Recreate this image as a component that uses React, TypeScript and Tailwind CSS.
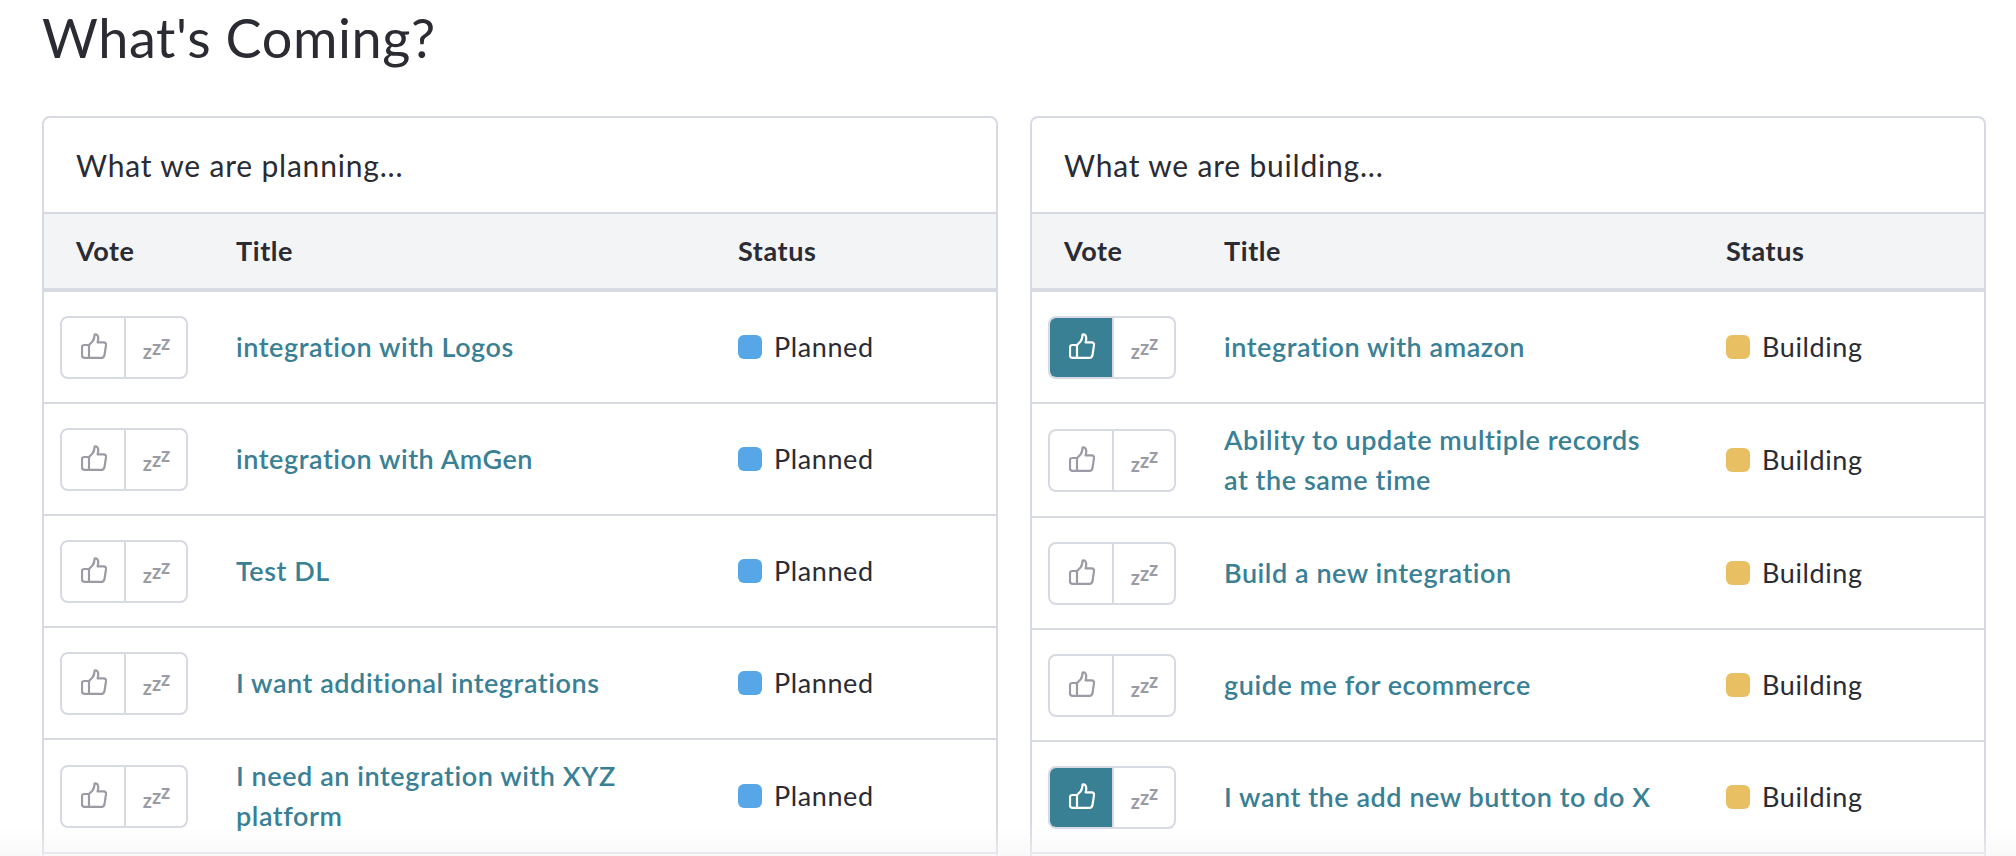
const plan: [string, boolean][] = [
  ["integration with Logos", false],
  ["integration with AmGen", false],
  ["Test DL", false],
  ["I want additional integrations", false],
  ["I need an integration with XYZ platform", false],
  ["", false],
];
const build: [string, boolean][] = [
  ["integration with amazon", true],
  ["Ability to update multiple records at the same time", false],
  ["Build a new integration", false],
  ["guide me for ecommerce", false],
  ["I want the add new button to do X", true],
  ["", false],
];

function Thumb({ on }: { on: boolean }) {
  return (
    <svg width="26" height="26" viewBox="0 0 26 26" fill="none" stroke={on ? "#ffffff" : "#9a9ba5"} strokeWidth="2.2" strokeLinejoin="round" strokeLinecap="round">
      <path d="M8 12 L11.5 8.5 C13 6.8 13.4 4 13.6 1.6 C16 0.6 18.4 3.2 16.6 9.4 L22.6 9.4 C24.6 9.4 25.4 10.8 25 12.4 L23.4 22.6 C23.1 24 22.2 24.8 20.8 24.8 L3.4 24.8 C1.9 24.8 1 24 1 22.6 V14 C1 12.6 1.9 12 3.4 12 H8 V24.6" />
    </svg>
  );
}

function Vote({ on }: { on: boolean }) {
  return (
    <div className="flex h-[63px] w-[128px] overflow-hidden rounded-[8px] border-2 border-[#d8dae3] bg-white">
      <div className={`flex w-[64px] shrink-0 items-center justify-center border-r-2 border-[#d8dae3] pb-[3px] pl-[2px] ${on ? "bg-[#3a8095]" : ""}`}>
        <Thumb on={on} />
      </div>
      <div className="flex flex-1 items-end justify-center pb-[19px] pl-[1px] text-[20px] leading-[14px] font-bold text-[#9a9ba5]">
        <span>z</span>
        <span className="mb-[4px]">z</span>
        <span className="mb-[9px]">z</span>
      </div>
    </div>
  );
}

function Row({ title, on, status, color }: { title: string; on: boolean; status: string; color: string }) {
  return (
    <div className="grid min-h-[112px] grid-cols-[192px_502px_1fr] items-center border-b-2 border-[#d8dae3]">
      <div className="pl-[16px]">{title && <Vote on={on} />}</div>
      <div className="py-[16px] pr-[64px] text-[27px] leading-[40px] font-semibold tracking-[0.55px] text-[#3a8095]">{title}</div>
      <div className="flex items-center gap-[12px] text-[27px] tracking-[0.6px] text-[#2a2b33]">
        {title && <span className="h-[24px] w-[24px] rounded-[6px]" style={{ background: color }} />}
        {title && <span>{status}</span>}
      </div>
    </div>
  );
}

function Card({ heading, rows, status, color }: { heading: string; rows: [string, boolean][]; status: string; color: string }) {
  return (
    <div className="w-[956px] shrink-0 rounded-t-[8px] border-2 border-[#d8dae3] bg-white">
      <div className="flex h-[94px] items-center pl-[32px] text-[30px] tracking-[0.8px] text-[#2a2b33]">{heading}</div>
      <div className="grid h-[80px] grid-cols-[192px_502px_1fr] items-center border-y-2 border-b-[4px] border-[#d8dae3] bg-[#f3f4f6] text-[27px] font-bold tracking-[0.6px] text-[#2a2b33]">
        <div className="pl-[32px]">Vote</div>
        <div>Title</div>
        <div>Status</div>
      </div>
      {rows.map((r, i) => (
        <Row key={i} title={r[0]} on={r[1]} status={status} color={color} />
      ))}
    </div>
  );
}

export default function App() {
  return (
    <div className="relative h-[856px] w-[2016px] overflow-hidden bg-white font-['Lato',sans-serif]">
      <h1 className="pl-[42px] pt-[4px] text-[54px] leading-[68px] font-normal tracking-[0.6px] text-[#2a2b33]">What's Coming?</h1>
      <div className="mt-[44px] flex gap-[32px] pl-[42px]">
        <Card heading="What we are planning..." rows={plan} status="Planned" color="#57a6e8" />
        <Card heading="What we are building..." rows={build} status="Building" color="#e8bf63" />
      </div>
      <div className="absolute inset-x-0 bottom-0 h-[30px] bg-gradient-to-b from-transparent to-[#f5f5f6]/60" />
    </div>
  );
}
